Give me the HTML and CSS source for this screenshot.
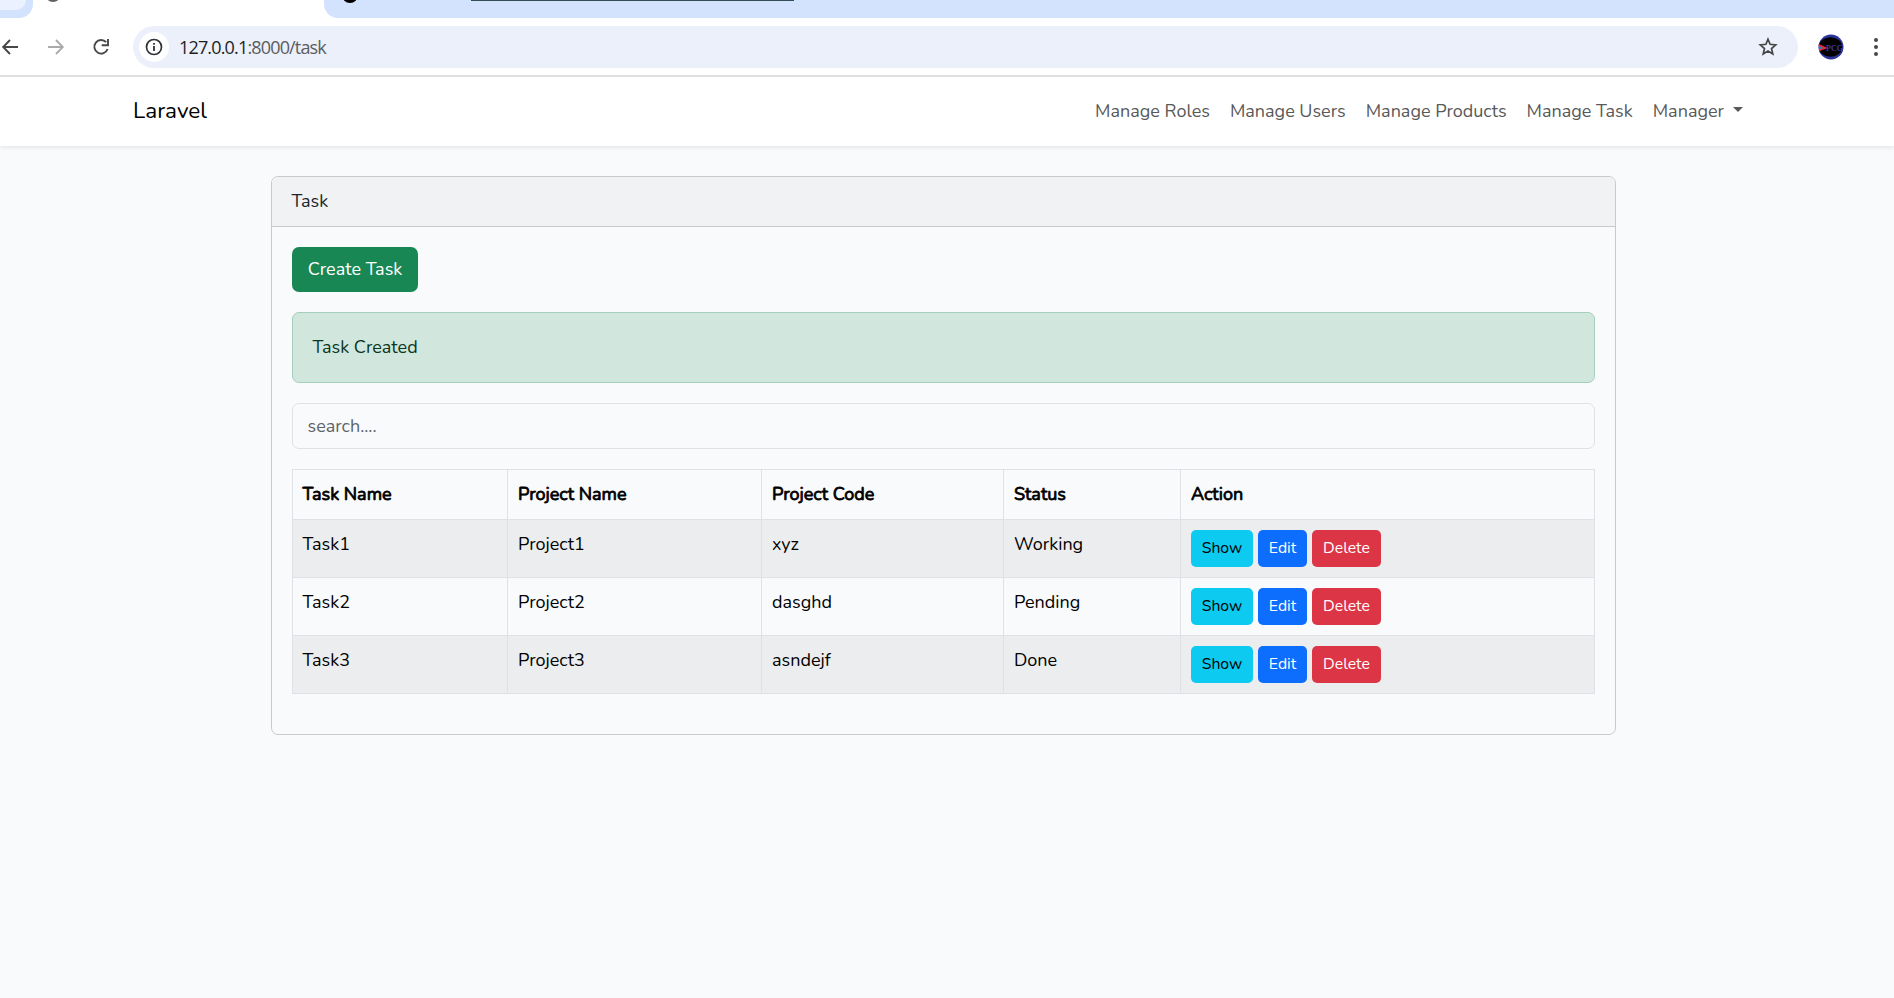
FILE: index.html
```html
<!DOCTYPE html>
<html lang="en">
<head>
<meta charset="utf-8">
<title>Laravel</title>
<link rel="stylesheet" href="styles.css">
</head>
<body>
<header class="browser">
  <div class="tabs">
    <div class="tab-left"><span class="tab-hover"></span></div>
    <div class="tab-active"><span class="favicon grey"></span></div>
    <div class="tab-rest"><span class="favicon black"></span><span class="tab-line"></span></div>
  </div>
  <div class="toolbar">
    <svg class="ic back" width="18" height="18" viewBox="0 0 18 18"><path d="M17 9H3M9 2 2.2 9 9 16" fill="none" stroke="#474747" stroke-width="1.9"/></svg>
    <svg class="ic fwd" width="18" height="18" viewBox="0 0 18 18"><path d="M1 9h14M9 2l6.8 7L9 16" fill="none" stroke="#ababab" stroke-width="1.9"/></svg>
    <svg class="ic reload" width="18" height="18" viewBox="0 0 18 18"><path d="M14.2 4.2A6.8 6.8 0 1 0 15.6 11" fill="none" stroke="#474747" stroke-width="1.9"/><path d="M16 1v6.3H9.7" fill="none" stroke="#474747" stroke-width="1.9"/></svg>
    <div class="omnibox">
      <span class="info"><svg width="18" height="18" viewBox="0 0 18 18"><circle cx="9" cy="9" r="7.5" fill="none" stroke="#303235" stroke-width="1.7"/><path d="M9 8v5M9 5v1.8" stroke="#303235" stroke-width="1.8"/></svg></span>
      <span class="url"><span class="host">127.0.0.1</span>:8000/task</span>
      <svg class="star" width="20" height="20" viewBox="0 0 20 20"><path d="M10 2.2l2.1 5.1 5.6.5-4.2 3.7 1.3 5.5L10 14.1 5.2 17l1.3-5.5-4.2-3.7 5.6-.5z" fill="none" stroke="#474747" stroke-width="1.7"/></svg>
    </div>
    <svg class="avatar" width="26" height="26" viewBox="0 0 26 26"><defs><clipPath id="disc"><circle cx="13" cy="13" r="12.5"/></clipPath></defs><g clip-path="url(#disc)"><rect width="26" height="26" fill="#2b3398"/><ellipse cx="12.5" cy="13" rx="11.7" ry="9.8" fill="#000"/><path d="M1 11l7 3-7 3z" fill="#2d7fc4"/><path d="M0 10.5l7.5 3.5L0 16.8" fill="none" stroke="#f02828" stroke-width="1.6"/><text x="8" y="16.8" class="avatar-text">PCG</text></g></svg>
    <svg class="dots" width="6" height="20" viewBox="0 0 6 20"><g fill="#474747"><circle cx="3" cy="3" r="2"/><circle cx="3" cy="10" r="2"/><circle cx="3" cy="17" r="2"/></g></svg>
  </div>
</header>
<nav class="navbar">
  <a class="brand">Laravel</a>
  <div class="links">
    <a>Manage Roles</a>
    <a>Manage Users</a>
    <a>Manage Products</a>
    <a>Manage Task</a>
    <a>Manager</a>
    <span class="caret"></span>
  </div>
</nav>
<main class="card">
  <div class="card-header">Task</div>
  <div class="card-body">
    <a class="btn create">Create Task</a>
    <div class="alert">Task Created</div>
    <input class="search" type="text" placeholder="search....">
    <table class="table">
      <colgroup><col class="c1"><col class="c2"><col class="c3"><col class="c4"><col class="c5"></colgroup>
      <thead><tr><th>Task Name</th><th>Project Name</th><th>Project Code</th><th>Status</th><th>Action</th></tr></thead>
      <tbody>
        <tr><td>Task1</td><td>Project1</td><td>xyz</td><td>Working</td><td><div class="actions"><a class="btn show">Show</a><a class="btn edit">Edit</a><a class="btn delete">Delete</a></div></td></tr>
        <tr><td>Task2</td><td>Project2</td><td>dasghd</td><td>Pending</td><td><div class="actions"><a class="btn show">Show</a><a class="btn edit">Edit</a><a class="btn delete">Delete</a></div></td></tr>
        <tr><td>Task3</td><td>Project3</td><td>asndejf</td><td>Done</td><td><div class="actions"><a class="btn show">Show</a><a class="btn edit">Edit</a><a class="btn delete">Delete</a></div></td></tr>
      </tbody>
    </table>
  </div>
</main>
</body>
</html>
```

FILE: styles.css
```css
* { box-sizing: border-box; }
body {
  margin: 0;
  min-height: 998px;
  background: #f8fafc;
  color: #212529;
  font: 18px/29px Nunito, Lato, sans-serif;
  overflow: hidden;
}
.browser { background: #fff; border-bottom: 2px solid #e0e0e0; }
.tabs { display: flex; height: 18px; overflow: hidden; background: #fff; }
.tab-left { width: 33px; background: #d3e3fd; border-bottom-right-radius: 14px; }
.tab-hover { display: block; width: 26px; height: 10px; background: #ebf1fe; border-bottom-right-radius: 10px; }
.tab-active { width: 291px; padding-left: 12px; }
.tab-rest { flex: 1; display: flex; background: #d3e3fd; border-bottom-left-radius: 14px; padding-left: 18px; }
.favicon { display: block; width: 16px; height: 16px; margin-top: -14px; border-radius: 50%; }
.grey { background: #5f6368; }
.black { margin-top: -13px; background: #000; }
.tab-line { width: 323px; height: 1px; margin-left: 113px; background: #2f4f55; }
.toolbar { display: flex; align-items: center; height: 57px; padding: 0 15px 0 1px; }
.ic { flex: none; }
.fwd { margin-left: 28px; }
.reload { margin-left: 27px; }
.omnibox { display: flex; align-items: center; width: 1665px; height: 42px; margin: 1px 0 0 23px; padding: 0 20px 0 6px; border-radius: 21px; background: #ebf0fa; }
.info { display: flex; align-items: center; justify-content: center; width: 30px; height: 30px; border-radius: 50%; background: #fff; }
.url { flex: 1; margin-left: 10px; font: 18px/24px "Open Sans", sans-serif; letter-spacing: -.84px; color: #5a5d61; }
.host { color: #1f1f1f; }
.avatar { margin-left: 20px; }
.avatar-text { font: bold 8px "Liberation Serif", serif; fill: #3d3aa8; }
.dots { margin-left: 29px; }

.navbar { position: relative; display: flex; align-items: center; justify-content: space-between; height: 69px; padding: 0 151px 0 133px; background: #fff; box-shadow: 0 2px 4px rgba(0,0,0,.075); }
.brand { padding-bottom: 2px; font-size: 22.5px; color: #000; }
.links { display: flex; align-items: center; gap: 20px; color: #595959; white-space: nowrap; }
.links a { flex: none; }
.caret { margin: -4px 0 0 -11px; border: 5px solid transparent; border-top-color: #595959; border-bottom: 0; }

.card { width: 1345px; height: 559px; margin: 30px 0 0 271px; border: 1px solid #c8cacc; border-radius: 7px; }
.card-header { height: 50px; padding: 10px 19.5px; background: #f1f2f4; border-bottom: 1px solid #c8cacc; border-radius: 6px 6px 0 0; }
.card-body { display: flex; flex-direction: column; align-items: flex-start; padding: 20px; }
.btn { display: flex; align-items: center; justify-content: center; color: #fff; border-radius: 7px; white-space: nowrap; }
.create { width: 126px; height: 45px; background: #198754; }
.alert { width: 100%; height: 71px; margin-top: 20px; padding: 20px 19.5px; border: 1px solid #a3cfbb; border-radius: 7px; background: #d1e7dd; color: #0a3622; }
.search { width: 100%; height: 46px; margin-top: 20px; padding: 0 14.5px; border: 1px solid #dee2e6; border-radius: 7px; background: #f8fafc; color: #212529; font: inherit; }
.search::placeholder { color: #5f6468; opacity: 1; }
.table { width: 1303px; margin-top: 20px; border-collapse: collapse; table-layout: fixed; color: #000; }
.c1 { width: 215px; }
.c2 { width: 254px; }
.c3 { width: 242px; }
.c4 { width: 177px; }
.c5 { width: 414px; }
th, td { padding: 10px; border: 1px solid #dee2e6; vertical-align: top; text-align: left; }
th { height: 50px; font-weight: 400; -webkit-text-stroke: .8px #000; }
td { height: 58px; }
th:first-child, td:first-child { padding-left: 9.5px; }
tbody tr:nth-child(odd) td { background: #ebedee; }
.actions { display: flex; gap: 5px; }
.actions .btn { height: 37px; padding-bottom: 1px; border-radius: 5px; font-size: 15.75px; line-height: 24px; }
.actions .show { width: 62px; color: #000; background: #0dcaf0; }
.edit { width: 49px; background: #0d6efd; }
.delete { width: 69px; background: #dc3545; }
```
